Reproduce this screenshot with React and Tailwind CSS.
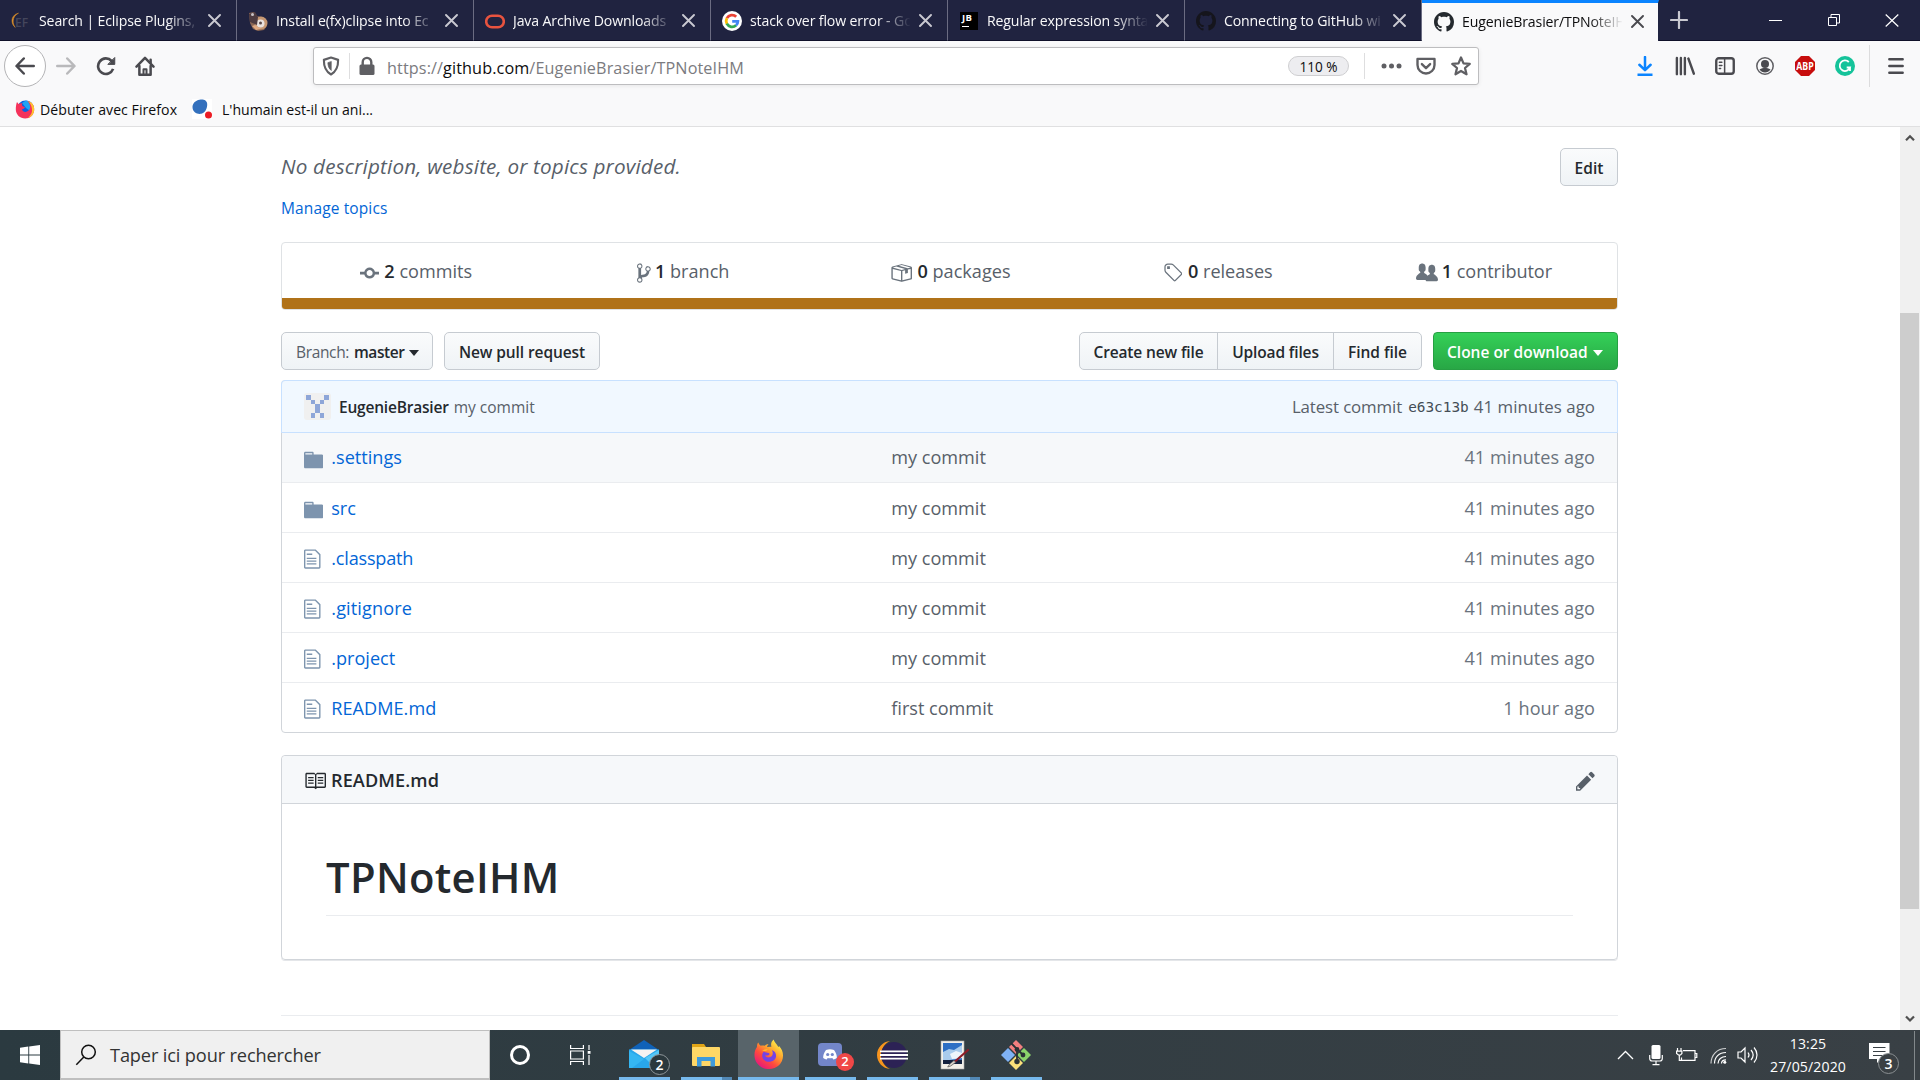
const OCT = {
  commit: [14, "M10.86 7c-.45-1.72-2-3-3.86-3-1.86 0-3.41 1.28-3.86 3H0v2h3.14c.45 1.72 2 3 3.86 3 1.86 0 3.41-1.28 3.86-3H14V7h-3.14zM7 10.2c-1.22 0-2.2-.98-2.2-2.2 0-1.22.98-2.2 2.2-2.2 1.22 0 2.2.98 2.2 2.2 0 1.22-.98 2.2-2.2 2.2z"],
  branch: [10, "M10 5c0-1.11-.89-2-2-2a1.993 1.993 0 0 0-1 3.72v.3c-.02.52-.23.98-.63 1.38-.4.4-.86.61-1.38.63-.83.02-1.48.16-2 .45V4.72a1.993 1.993 0 0 0-1-3.72C.88 1 0 1.89 0 3a2 2 0 0 0 1 1.72v6.56c-.59.35-1 .99-1 1.72 0 1.11.89 2 2 2 1.11 0 2-.89 2-2 0-.53-.2-1-.53-1.36.09-.06.48-.41.59-.47.25-.11.56-.17.94-.17 1.05-.05 1.95-.45 2.75-1.25S8.95 7.77 9 6.73h-.02C9.59 6.37 10 5.73 10 5zM2 1.8c.66 0 1.2.55 1.2 1.2 0 .65-.55 1.2-1.2 1.2C1.35 4.2.8 3.65.8 3c0-.65.55-1.2 1.2-1.2zm0 12.41c-.66 0-1.2-.55-1.2-1.2 0-.65.55-1.2 1.2-1.2.65 0 1.2.55 1.2 1.2 0 .65-.55 1.2-1.2 1.2zm6-8c-.66 0-1.2-.55-1.2-1.2 0-.65.55-1.2 1.2-1.2.65 0 1.2.55 1.2 1.2 0 .65-.55 1.2-1.2 1.2z"],
  package: [16, "M1 4.27v7.47c0 .45.3.84.75.97l6.5 1.73c.16.05.34.05.5 0l6.5-1.73c.45-.13.75-.52.75-.97V4.27c0-.45-.3-.84-.75-.97l-6.5-1.74a1.4 1.4 0 0 0-.5 0L1.75 3.3c-.45.13-.75.52-.75.97zm7 9.09l-6-1.59V5l6 1.61v6.75zM2 4l2.5-.67L11 5.06l-2.5.67L2 4zm13 7.77l-6 1.59V6.61l2-.55V8.5l2-.53V5.53L15 5v6.77zm-2-7.24L6.5 2.8l2-.53L15 4l-2 .53z"],
  tag: [14, "M7.73 1.73C7.26 1.26 6.62 1 5.96 1H3.5C2.13 1 1 2.13 1 3.5v2.47c0 .66.27 1.3.73 1.77l6.06 6.06c.39.39 1.02.39 1.41 0l4.59-4.59a.996.996 0 0 0 0-1.41L7.73 1.73zM2.38 7.09c-.31-.3-.47-.7-.47-1.13V3.5c0-.88.72-1.59 1.59-1.59h2.47c.42 0 .83.16 1.13.47l6.14 6.13-4.73 4.73-6.13-6.15zM3.01 3h2v2H3V3h.01z"],
  people: [16, "M16 12.999c0 .439-.45 1-1 1H7.995c-.539 0-.994-.447-.995-.999H1c-.54 0-1-.561-1-1 0-2.634 3-4 3-4s.229-.409 0-1c-.841-.621-1.058-.59-1-3 .058-2.419 1.367-3 2.5-3s2.442.58 2.5 3c.058 2.41-.159 2.379-1 3-.229.59 0 1 0 1s1.549.711 2.42 2.088C9.196 9.369 10 8.999 10 8.999s.229-.409 0-1c-.841-.62-1.058-.59-1-3 .058-2.419 1.367-3 2.5-3s2.437.581 2.495 3c.059 2.41-.158 2.38-1 3-.229.59 0 1 0 1s3.005 1.366 3.005 4"],
  folder: [14, "M13 4H7V3c0-.66-.31-1-1-1H1c-.55 0-1 .45-1 1v10c0 .55.45 1 1 1h12c.55 0 1-.45 1-1V5c0-.55-.45-1-1-1zM6 4H1V3h5v1z"],
  file: [12, "M6 5H2V4h4v1zM2 8h7V7H2v1zm0 2h7V9H2v1zm0 2h7v-1H2v1zm10-7.5V14c0 .55-.45 1-1 1H1c-.55 0-1-.45-1-1V2c0-.55.45-1 1-1h7.500L12 4.500zM11 5L8 2H1v12h10V5z"],
  book: [16, "M3 5h4v1H3V5zm0 3h4V7H3v1zm0 2h4V9H3v1zm11-5h-4v1h4V5zm0 2h-4v1h4V7zm0 2h-4v1h4V9zm2-6v9c0 .55-.45 1-1 1H9.5l-1 1-1-1H2c-.55 0-1-.45-1-1V3c0-.55.45-1 1-1h5.5l1 1 1-1H15c.55 0 1 .45 1 1zm-8 .5L7.5 3H2v9h6V3.5zm7-.5H9.5l-.5.5V12h6V3z"],
  pencil: [14, "M0 12v3h3l8-8-3-3-8 8zm3 2H1v-2h1v1h1v1zm10.3-9.3L12 6 9 3l1.3-1.3a.996.996 0 0 1 1.41 0l1.59 1.59c.39.39.39 1.02 0 1.41z"],
  github: [16, "M8 0C3.58 0 0 3.58 0 8c0 3.54 2.29 6.53 5.47 7.59.4.07.55-.17.55-.38 0-.19-.01-.82-.01-1.49-2.01.37-2.53-.49-2.69-.94-.09-.23-.48-.94-.82-1.13-.28-.15-.68-.52-.01-.53.63-.01 1.08.58 1.23.82.72 1.21 1.87.87 2.33.66.07-.52.28-.87.51-1.07-1.78-.2-3.64-.89-3.64-3.95 0-.87.31-1.59.82-2.15-.08-.2-.36-1.02.08-2.12 0 0 .67-.21 2.2.82.64-.18 1.32-.27 2-.27s1.36.09 2 .27c1.53-1.04 2.2-.82 2.2-.82.44 1.1.16 1.92.08 2.12.51.56.82 1.27.82 2.15 0 3.07-1.87 3.75-3.65 3.95.29.25.54.73.54 1.48 0 1.07-.01 1.93-.01 2.2 0 .21.15.46.55.38A8.01 8.01 0 0 0 16 8c0-4.42-3.58-8-8-8z"],
};

function Oct({ name, h = 22, className = "" }) {
  const [w, d] = OCT[name];
  return (
    <svg className={`shrink-0 ${className}`} width={(w * h) / 16} height={h} viewBox={`0 0 ${w} 16`} fill="currentColor">
      <path fillRule="evenodd" d={d} />
    </svg>
  );
}

function Line({ size = 20, box = 16, w = 2, children, className = "" }) {
  return (
    <svg className={`shrink-0 ${className}`} width={size} height={size} viewBox={`0 0 ${box} ${box}`} fill="none" stroke="currentColor" strokeWidth={w} strokeLinecap="round" strokeLinejoin="round">
      {children}
    </svg>
  );
}

const EclipseFav = () => (
  <svg width="20" height="20" viewBox="0 0 20 20">
    <path d="M7.500 2.200C3.200 3 .8 6.400 1 10.200c.1 2.600 1.500 5 3.300 6.200C2.800 14.500 2 12.300 2.200 9.800 2.400 6.200 4.500 3.500 7.500 2.200z" fill="#d98e2b" stroke="#d98e2b" strokeWidth=".5" />
    <text x="4" y="15.500" fontSize="12" fontWeight="600" fontFamily="Open Sans, sans-serif" fill="#44465c">EF</text>
  </svg>
);
const PhotoFav = () => (
  <svg width="20" height="20" viewBox="0 0 20 20">
    <path d="M1 2l5-1 3 4 5 1 4 4 1 5-3 4-6 1-5-2-3-6z" fill="#8a6653" />
    <ellipse cx="13" cy="12" rx="6.500" ry="6.500" fill="#c69873" />
    <circle cx="12.500" cy="12.500" r="4" fill="#e9e2df" />
    <path d="M1 3l6-2 3 5-1 8-7-3z" fill="#4d3b40" />
    <circle cx="4.500" cy="3.500" r="1.500" fill="#c9c3c6" />
    <circle cx="12.500" cy="12" r="1.500" fill="#5b4a4a" />
    <path d="M4 15l4 4 5-1-6-4z" fill="#e0a982" />
  </svg>
);
const OracleFav = () => (
  <svg width="20" height="20" viewBox="0 0 20 20" fill="none">
    <rect x="1.200" y="4.700" width="17.600" height="11.600" rx="5.800" stroke="#e8533f" strokeWidth="2.600" />
  </svg>
);
const GoogleFav = () => (
  <svg width="20" height="20" viewBox="0 0 20 20" fill="none">
    <circle cx="10" cy="10" r="10" fill="#fff" />
    <g strokeWidth="2.800">
      <path d="M4.900 7.200A5.900 5.900 0 0 1 14.200 5.800" stroke="#ea4335" />
      <path d="M4.900 12.800a5.900 5.900 0 0 1 0-5.600" stroke="#fbbc05" />
      <path d="M14.100 14.200A5.900 5.900 0 0 1 4.800 12.700" stroke="#34a853" />
      <path d="M10.200 10.300h5.700c0 1.700-.6 3-1.900 4" stroke="#4285f4" />
    </g>
  </svg>
);
const JbFav = () => (
  <span className="flex h-[18px] w-[18px] flex-col bg-black px-[2px] pt-px">
    <span className="text-[9.500px] leading-[10px] font-bold tracking-[0.300px] text-white">JB</span>
    <span className="mt-[3px] h-[1.500px] w-[7px] bg-white" />
  </span>
);

const TABS = [
  { t: "Search | Eclipse Plugins,", icon: <EclipseFav /> },
  { t: "Install e(fx)clipse into Ec", icon: <PhotoFav /> },
  { t: "Java Archive Downloads", icon: <OracleFav /> },
  { t: "stack over flow error - Go", icon: <GoogleFav /> },
  { t: "Regular expression synta", icon: <JbFav /> },
  { t: "Connecting to GitHub wi", icon: <Oct name="github" h={20} className="text-[#15151c]" /> },
  { t: "EugenieBrasier/TPNoteIH", icon: <Oct name="github" h={20} className="text-[#24292e]" />, active: true },
];

function Tab({ t, icon, active }) {
  return (
    <div className={`flex h-[41px] w-[237px] shrink-0 items-center border-r pl-[11px] ${active ? "border-t-[3px] border-r-transparent border-t-[#0a84ff] bg-[#f9f9fa] bg-clip-padding pb-px pl-[12px] text-[#0c0c0d]" : "border-b border-b-[#0f1029] border-r-[#6b6c82] pt-px text-[#f9f9fa]"}`}>
      <span className="flex w-5 shrink-0 justify-center">{icon}</span>
      <span className="ml-2 w-[160px] pt-px text-[14.100px] leading-[22px] tracking-[-0.130px] whitespace-nowrap [mask-image:linear-gradient(to_right,#000_128px,transparent_161px)]">{t}</span>
      <svg className={`ml-[9px] shrink-0 ${active ? "text-[#4a4a4f]" : "text-[#c9c9d1]"}`} width="13" height="13" viewBox="0 0 13 13" stroke="currentColor" strokeWidth="1.900" strokeLinecap="round">
        <path d="M1 1l11 11M12 1L1 12" />
      </svg>
    </div>
  );
}

function TabStrip() {
  return (
    <div className="flex h-[41px] bg-[#202340]">
      {TABS.map((x) => <Tab key={x.t} {...x} />)}
      <div className="flex flex-1 items-center border-b border-[#0f1029] pl-[11px]">
        <svg width="18" height="18" viewBox="0 0 18 18" stroke="#c9c9d1" strokeWidth="2.200" strokeLinecap="round"><path d="M9 1v16M1 9h16" /></svg>
        <div className="ml-auto flex items-center gap-[45px] pr-[21px] text-white">
          <svg className="mr-px" width="13" height="13" viewBox="0 0 13 13" stroke="currentColor"><path d="M0 6.500h13" /></svg>
          <svg width="12" height="13" viewBox="0 0 12 13" fill="none" stroke="currentColor"><path d="M.5 3.500h8v8h-8zM3 3.500V.5h8.500v8.500H8.500" /></svg>
          <svg width="14" height="13" viewBox="0 0 14 13" stroke="currentColor" strokeWidth="1.200"><path d="M.7.5l12.600 12M13.300.5L.7 12.500" /></svg>
        </div>
      </div>
    </div>
  );
}

const FirefoxIcon = ({ size, id }) => (
  <svg width={size} height={size} viewBox="0 0 32 32">
    <defs>
      <linearGradient id={id} x1="0.85" y1="0.1" x2="0.2" y2="0.95">
        <stop offset="0" stopColor="#fff14a" /><stop offset=".35" stopColor="#ffa12c" /><stop offset=".65" stopColor="#ff4a3d" /><stop offset="1" stopColor="#e6157f" />
      </linearGradient>
    </defs>
    <path d="M16.500 31C8 31 1.500 24.700 1.500 16.500c0-3.800 1.200-6.200 2.600-8.200-.1-1.600.4-3.500 1.300-4.600.6 1.500 1.500 2.600 2.600 3.300 1.500-.4 2.800-.4 4.200 0 .9-.9 2.400-1.700 3.900-1.800-1 .9-1.400 2-1.600 3l4.500-.2c-.9-3 0-5.500 2.300-7.500C21.800 3 24.500 5 26 8c.5.500.8.300.7-1C29.500 10 31 13 31 17c0 8-6.300 14-14.500 14z" fill={`url(#${id})`} />
    <path d="M16.500 23.500c-4 0-7-2.800-7-6.300 0-1.700.8-3.300 1.800-4.200 1.200 1.300 3.200 1.100 4.700 1.400 1.200.2 1.500 1.500.3 2.200-1.500.8-2.900.5-4 .5 1 2 3.500 2.500 5.700 1.500 2.500-1.100 3.200-4.500 1.300-7.300 3 .8 4.800 3.500 4.500 6.500-.3 3.400-3.400 5.700-7.300 5.700z" fill="#7542e5" />
    <path d="M9.500 12.500c1.500-1.800 3.800-2.500 6-2.200-1 .8-1.500 1.500-1.800 2.200z" fill="#ffb52e" />
  </svg>
);

const FirefoxGlobe = () => (
  <svg width="20" height="20" viewBox="0 0 20 20">
    <circle cx="10.500" cy="10" r="8.500" fill="#0a5fe0" />
    <path d="M7 4l4-2.500 5 1.500 2 5-3 4-4-3z" fill="#1fa4f5" />
    <path d="M2 3l1.500 2C5 4 6.500 4 7.500 4.500 6.500 6 7 7.500 10 8c-.5 1.500-2 2-3 2.500.5 2 3 3 5 2 2.500-1 3.500-3 3-5.500-.5-2-1-3.500-2.500-5C17 3 19.500 6.500 19.200 11c-.4 5-4.200 8.500-9 8.500C5 19.500.8 15.500.8 10.500.8 7.500 1.200 5 2 3z" fill="#f5325b" />
    <path d="M13 2c4 1 6.500 4.500 6.200 9-.3 4-2.700 7-6.200 8 3-3 4.500-5.500 4-9-.4-3-1.500-6-4-8z" fill="#ffc42e" />
  </svg>
);

function NavBar() {
  return (
    <div className="flex h-[50px] items-center text-[#4a4a4f]">
      <div className="ml-[4px] flex h-[42px] w-[42px] items-center justify-center rounded-full border border-[#b4b4b6] bg-white">
        <Line><path d="M15 8H1.500M7 2L1.200 8 7 14" /></Line>
      </div>
      <Line className="ml-[10px] text-[#b9b9bb]"><path d="M1 8h13.500M9 2l5.800 6L9 14" /></Line>
      <Line className="ml-[20px]" w={2.1}><path d="M13.700 10.300A6.200 6.200 0 1 1 12.500 4l1.500 1.700" strokeLinecap="butt" /><path d="M15 1.500v5.200H9.800z" fill="currentColor" strokeWidth=".8" /></Line>
      <Line className="ml-[19px]"><path d="M1.200 8.500L8 1.500l6.800 7" /><path d="M3.500 8v7h9V8" /><path d="M6.800 14.500v-4h2.400v4" strokeWidth="1.600" /><path d="M12.500 3v2" /></Line>
      <div className="ml-[158px] flex h-[38px] w-[1166px] items-center rounded-[3px] border border-[#bdbdbf] bg-white shadow-[0_1px_4px_rgba(0,0,0,0.08)]">
        <Line size={20} className="ml-[7px] text-[#5f5f63]" w={1.7}><path d="M8 1.200L2.300 3.100c-.1 5.600 1.600 9.400 5.700 11.700 4.100-2.300 5.800-6.100 5.700-11.700z" /><path d="M8 4.500L5.500 5.300C5.600 8 6.300 10 8 11.400z" fill="currentColor" strokeWidth=".6" /></Line>
        <span className="ml-[8px] h-[26px] w-px bg-[#dededf]" />
        <svg className="ml-[8px]" width="18" height="20" viewBox="0 0 18 20" fill="none"><rect x="1.500" y="8.500" width="15" height="10.500" rx="1.500" fill="#5f5f63" /><path d="M4.700 9V6.200a4.300 4.300 0 0 1 8.600 0V9" stroke="#5f5f63" strokeWidth="2.400" /></svg>
        <span className="ml-[11px] pt-[3px] text-[16.200px] leading-[22px] tracking-[0.110px] text-[#7b7b80]">https://<span className="text-[#0c0c0d]">github.com</span>/EugenieBrasier/TPNoteIHM</span>
        <span className="ml-auto flex h-[20px] w-[61px] items-center justify-center rounded-full border border-[#cfcfd1] bg-[#ededf0] pt-[2px] text-[13.600px] text-[#0c0c0d]">110 %</span>
        <span className="ml-[15px] h-[26px] w-px bg-[#dededf]" />
        <svg className="ml-[16px] text-[#5f5f63]" width="21" height="6" viewBox="0 0 21 6" fill="currentColor"><circle cx="3" cy="3" r="2.500" /><circle cx="10.500" cy="3" r="2.500" /><circle cx="18" cy="3" r="2.500" /></svg>
        <Line className="ml-[14px] text-[#5f5f63]" w={1.9}><path d="M1.200 2.300h13.600v4.900a6.800 6.800 0 0 1-13.600 0z" /><path d="M4.700 6.500L8 9.700l3.300-3.200" /></Line>
        <Line className="mr-[7px] ml-[15px] text-[#5f5f63]" w={1.8}><path d="M8 1.200l2 4.700 5 .4-3.800 3.300 1.200 5L8 12l-4.400 2.600 1.200-5L1 6.300l5-.4z" /></Line>
      </div>
      <Line className="ml-auto text-[#0a84ff]"><path d="M8 .8v10M3.500 7L8 11.300 12.500 7" /><path d="M2 15h12" strokeLinecap="butt" /></Line>
      <svg className="ml-[20px]" width="20" height="20" viewBox="0 0 16 16" stroke="currentColor" strokeWidth="1.900" strokeLinecap="round"><path d="M1.500 1.500v13M4.700 1.500v13M7.900 1.500v13M10.700 2l4.400 12.200" /></svg>
      <Line className="ml-[20px]" w={1.9}><rect x="1" y="1.800" width="14" height="12.400" rx="2" /><path d="M7.700 2v12M3.500 5h2M3.500 7.500h2M3.500 10h1" strokeWidth="1.200" /></Line>
      <svg className="ml-[20px]" width="20" height="20" viewBox="0 0 20 20" fill="none"><circle cx="10" cy="10" r="8.200" stroke="#5f5f63" strokeWidth="1.500" /><circle cx="10" cy="8" r="4" fill="#4a4a4f" /><path d="M4.500 13.600c2-1.200 3.500-1.600 5.500-1.600s3.500.4 5.500 1.600c-1.300 1.900-3.300 2.900-5.500 2.900s-4.200-1-5.500-2.900z" fill="#4a4a4f" /></svg>
      <svg className="ml-[20px]" width="20" height="20" viewBox="0 0 20 20"><path d="M6 0h8l6 6v8l-6 6H6l-6-6V6z" fill="#c70d0d" /><text x="1.300" y="13.700" fontSize="10.500" fontWeight="700" fontFamily="Open Sans, sans-serif" fill="#fff" textLength="17.400" lengthAdjust="spacingAndGlyphs">ABP</text></svg>
      <svg className="ml-[20px]" width="20" height="20" viewBox="0 0 20 20" fill="none"><circle cx="10" cy="10" r="10" fill="#15c39a" /><path d="M13.800 6A5.300 5.300 0 1 0 15 11.500h-3.300M15 11v4" stroke="#fff" strokeWidth="1.800" /></svg>
      <span className="ml-[14px] h-[42px] w-px bg-[#dcdcdd]" />
      <svg className="mr-[16px] ml-[18px]" width="16" height="20" viewBox="0 0 16 20" stroke="currentColor" strokeWidth="2.400" strokeLinecap="round"><path d="M1.300 3.300h13.400M1.300 10h13.400M1.300 16.700h13.400" /></svg>
    </div>
  );
}

function Bookmarks() {
  return (
    <div className="flex h-[36px] items-center border-b border-[#e0e0e1] text-[14.100px] text-[#0c0c0d]">
      <span className="ml-[15px]"><FirefoxGlobe /></span>
      <span className="ml-[5px] w-[137px] pt-[3px] tracking-[0.050px] whitespace-nowrap">Débuter avec Firefox</span>
      <svg className="ml-[15px]" width="20" height="20" viewBox="0 0 20 20"><rect width="20" height="20" fill="#fff" /><path d="M7.500.8C11 0 15 1 15.200 5c.2 4.500-2 9-6 9.800C5 15.600.8 13 .5 8.500.3 4.500 3.500 1.500 7.500.8z" fill="#3370bd" /><circle cx="16.500" cy="16" r="3.500" fill="#ec1c24" /></svg>
      <span className="ml-[10px] pt-[3px] tracking-[-0.020px] whitespace-nowrap">L'humain est-il un ani...</span>
    </div>
  );
}

const Btn = ({ children, className = "" }) => (
  <div className={`flex h-[38px] items-center border border-[#c6cbd1] bg-linear-to-b from-[#fafbfc] to-[#eff3f6] pt-[3px] text-[15.500px] font-semibold whitespace-nowrap text-[#24292e] ${className}`}>{children}</div>
);
const Caret = ({ className = "" }) => <span className={`h-0 w-0 border-x-[5px] border-t-[6px] border-x-transparent ${className}`} />;

const STATS = [
  ["commit", "2", "commits", "gap-[5px] pl-px"],
  ["branch", "1", "branch", "gap-[4px] pl-px"],
  ["package", "0", "packages", "gap-[5px] pl-px"],
  ["tag", "0", "releases", "gap-[6px] pl-px"],
  ["people", "1", "contributor", "gap-[4px] tracking-[-0.060px]"],
];

const FILES = [
  ["folder", ".settings", "my commit", "41 minutes ago"],
  ["folder", "src", "my commit", "41 minutes ago"],
  ["file", ".classpath", "my commit", "41 minutes ago"],
  ["file", ".gitignore", "my commit", "41 minutes ago"],
  ["file", ".project", "my commit", "41 minutes ago"],
  ["file", "README.md", "first commit", "1 hour ago"],
];

const NAME_TRACKING = {
  ".settings": "tracking-[0.020px]",
  ".classpath": "tracking-[-0.200px]",
  ".gitignore": "tracking-[0.130px]",
  "README.md": "tracking-[0.040px]",
};

const AVATAR = ["10001", "01010", "00100", "00100", "01010"];

function Avatar() {
  return (
    <div className="grid h-[27px] w-[27px] shrink-0 grid-cols-5 rounded-[3px] bg-[#f0f0f0] p-[2px]">
      {AVATAR.join("").split("").map((c, i) => <span key={i} className={c === "1" ? "bg-[#8ea6d8]" : ""} />)}
    </div>
  );
}

function Repo() {
  return (
    <main className="ml-[281px] w-[1337px] text-[#586069]">
      <div className="flex justify-between pt-[21px]">
        <div>
          <p className="mt-[3px] text-[20.700px] leading-[30px] tracking-[0.160px] italic">No description, website, or topics provided.</p>
          <p className="mt-[15px] mb-px text-[15.500px] leading-[24px] tracking-[0.120px] text-[#0366d6]">Manage topics</p>
        </div>
        <Btn className="w-[58px] justify-center rounded-[5px]">Edit</Btn>
      </div>

      <section className="mt-[21px] h-[68px] overflow-hidden rounded-[4px] border border-[#dfe2e5]">
        <div className="flex h-[55px] items-center pt-[3px]">
          {STATS.map(([icon, n, label, gap]) => (
            <div key={label} className={`flex flex-1 items-center justify-center pb-[2px] text-[18.100px] leading-[28px] ${gap}`}>
              <Oct name={icon} className="mt-[3px] text-[#6a737d]" />
              <span><span className="font-semibold text-[#24292e]">{n}</span> {label}</span>
            </div>
          ))}
        </div>
        <div className="h-[11px] bg-[#b07219]" />
      </section>

      <div className="mt-[22px] flex">
        <Btn className="w-[152px] rounded-[5px] pl-[14px]">
          <span className="font-normal tracking-[-0.350px] text-[#586069]">Branch:</span>
          <span className="ml-[5px] tracking-[-0.450px]">master</span>
          <Caret className="ml-[5px] border-t-[#24292e]" />
        </Btn>
        <Btn className="ml-[11px] w-[156px] justify-center rounded-[5px] tracking-[-0.100px]">New pull request</Btn>
        <Btn className="ml-auto w-[139px] justify-center rounded-l-[5px] tracking-[-0.140px]">Create new file</Btn>
        <Btn className="-ml-px w-[117px] justify-center tracking-[-0.140px]">Upload files</Btn>
        <Btn className="-ml-px w-[89px] justify-center rounded-r-[5px] tracking-[-0.050px]">Find file</Btn>
        <div className="ml-[11px] flex h-[38px] w-[185px] items-center rounded-[4px] border border-[#279f43] bg-linear-to-b from-[#34d058] to-[#28a745] pt-[3px] pl-[13px] text-[15.500px] font-semibold whitespace-nowrap text-white">
          Clone or download<Caret className="ml-[5px] border-t-white" />
        </div>
      </div>

      <section className="mt-[10px] rounded-[4px] border border-[#d1d5da]">
        <div className="-mx-px -mt-px flex h-[53px] items-center rounded-t-[4px] border border-[#c8e1ff] bg-[#f1f8ff] px-[22px]">
          <Avatar />
          <span className="ml-[8px] pt-[2px] text-[15.500px] font-semibold tracking-[-0.200px] text-[#24292e]">EugenieBrasier</span>
          <span className="ml-[5px] pt-[2px] text-[15.500px]">my commit</span>
          <span className="ml-auto flex items-center text-[16.850px]">
            <span className="tracking-[-0.110px]">Latest commit</span>
            <span className="ml-[6px] pt-[3px] font-['DejaVu_Sans_Mono'] text-[14.400px] text-[#444d56]">e63c13b</span>
            <span className="ml-[5px] tracking-[0.040px]">41 minutes ago</span>
          </span>
        </div>
        {FILES.map(([icon, name, msg, age], i) => (
          <div key={name} className={`flex items-center px-[22px] text-[18.100px] ${i === 0 ? "h-[49px] bg-[#f6f8fa] pt-px" : "h-[50px] border-t border-[#eaecef] pt-[3px]"}`}>
            <Oct name={icon} className={`text-[#7d94ae] ${i === 0 ? "mt-[3px]" : i === 1 ? "mt-px" : "-mt-px"}`} />
            <span className={`w-[560px] text-[#0366d6] ${NAME_TRACKING[name] ?? ""} ${icon === "folder" ? "ml-[8px]" : "ml-[10.750px]"}`}>{name}</span>
            <span>{msg}</span>
            <span className="ml-auto tracking-[0.070px] text-[#6a737d]">{age}</span>
          </div>
        ))}
      </section>

      <section className="mt-[22px] h-[205px] rounded-[4px] border border-[#d1d5da] shadow-[0_1px_0_#e4e6e9]">
        <div className="flex h-[48px] items-center rounded-t-[4px] border-b border-[#d1d5da] bg-[#f6f8fa] px-[22px] text-[#24292e]">
          <Oct name="book" className="mt-[3px]" />
          <span className="ml-[5px] pt-[2px] text-[18.100px] font-semibold tracking-[0.110px]">README.md</span>
          <Oct name="pencil" className="mt-[2px] ml-auto text-[#586069]" />
        </div>
        <h1 className="mx-[44px] mt-[45px] h-[67px] border-b border-[#eaecef] text-[41.800px] leading-[56px] font-semibold tracking-[0.290px] text-[#24292e]">TPNoteIHM</h1>
      </section>
      <div className="mt-[55px] h-px bg-[#eaecef]" />
    </main>
  );
}

function Scrollbar() {
  return (
    <div className="flex w-[20px] flex-col items-center justify-between bg-[#f0f0f0] py-[7px]">
      <svg width="10" height="8" viewBox="0 0 10 8" fill="none" stroke="#505050" strokeWidth="2.200"><path d="M1 6.200l4-4 4 4" /></svg>
      <div className="mt-[171px] mb-auto h-[596px] w-[19px] self-start bg-[#cdcdcd]" />
      <svg width="10" height="8" viewBox="0 0 10 8" fill="none" stroke="#505050" strokeWidth="2.200"><path d="M1 1.500l4 4 4-4" /></svg>
    </div>
  );
}

const MailIcon = () => (
  <svg width="32" height="32" viewBox="0 0 32 32"><path d="M1 11L16 1l15 10v5H1z" fill="#0f62b8" /><path d="M1 10.500h30V29H1z" fill="#29a6ea" /><path d="M3 10.500h26L16 19z" fill="#f6f3f2" /><path d="M31 11L17 19l10 10h4z" fill="#55c8f8" /><path d="M1 12l15 8-12 9H1z" fill="#35b6f2" /></svg>
);
const FolderIcon = () => (
  <svg width="30" height="28" viewBox="0 0 30 28"><path d="M1 3h12l2 3h12v6H1z" fill="#e0a416" /><rect x="1" y="6" width="28" height="19" rx="1" fill="#ffd766" /><path d="M6 25.500V16h18v9.500h-4.500V20h-9v5.500z" fill="#3f9bdc" /></svg>
);
const DiscordIcon = () => (
  <svg width="26" height="26" viewBox="0 0 26 26"><rect x="1" y="1" width="24" height="23" rx="4" fill="#7386c9" /><path d="M9 8c2.700-1 5.300-1 8 0 2 2.500 3 5.500 2.800 8-1.200.9-2.200 1.300-3.500 1.500l-1-1.500c-1.600.3-3 .3-4.600 0l-1 1.500C8.400 17.300 7.400 16.900 6.200 16 6 13.500 7 10.500 9 8z" fill="#fff" /><circle cx="10.700" cy="12.500" r="1.600" fill="#7386c9" /><circle cx="15.300" cy="12.500" r="1.600" fill="#7386c9" /></svg>
);
const EclipseIcon = () => (
  <svg width="32" height="30" viewBox="0 0 32 30"><path d="M14 1C7 1.500 1 7.500 1 15s6 13.500 13 14c-5-2-9-8-9-14S9 3 14 1z" fill="#f7941e" /><circle cx="18" cy="15" r="13" fill="#2c2255" /><path d="M4 11.300h28M4 15h28M4 18.700h28" stroke="#fff" strokeWidth="1.800" /></svg>
);
const PaintIcon = () => (
  <svg width="32" height="32" viewBox="0 0 32 32"><rect x="3" y="2" width="23" height="28" fill="#f3f0e9" stroke="#aaa" strokeWidth=".6" /><rect x="5" y="4" width="19" height="18" fill="#2e6fc4" /><path d="M5 13l6-3 5 1 8-5v13l-19 3z" fill="#a9cbec" /><path d="M12 15l6-3 6 2v5l-10 1z" fill="#eef5fb" /><path d="M5 21h19v4H5z" fill="#14223f" /><path d="M30 11L17 22.500" stroke="#8d1c28" strokeWidth="2.200" strokeLinecap="round" /><path d="M16 21.500l1.700 1.800-5 3.700-3 1 2-3z" fill="#d8d3cb" stroke="#555" strokeWidth=".7" /></svg>
);
const GitIcon = () => (
  <svg width="32" height="32" viewBox="0 0 32 32">
    <path d="M16 1l7 7-7 7-7-7z" fill="#f37f7f" /><path d="M8 9l7 7-7 7-7-7z" fill="#7fb2f5" /><path d="M24 9l7 7-7 7-7-7z" fill="#8bd36b" /><path d="M16 17l7 7-7 7-7-7z" fill="#fbe07a" />
    <path d="M11 4l6 6v13M17 10l6 6" stroke="#2a3236" strokeWidth="1.800" fill="none" /><circle cx="17" cy="10.500" r="2.400" fill="#2a3236" /><circle cx="17" cy="22.500" r="2.700" fill="#2a3236" /><circle cx="23" cy="16" r="2.400" fill="#2a3236" />
  </svg>
);

const APPS = [
  { icon: <MailIcon />, badge: "dark" },
  { icon: <FolderIcon />, more: true },
  { icon: <FirefoxIcon size={31} id="ffBig" />, active: true },
  { icon: <DiscordIcon />, badge: "red" },
  { icon: <EclipseIcon /> },
  { icon: <PaintIcon />, more: true },
  { icon: <GitIcon /> },
];

function Taskbar() {
  return (
    <div className="flex h-[50px] bg-linear-to-r from-[#2b3a40] to-[#394045] text-white">
      <div className="flex w-[60px] items-center justify-center">
        <svg width="20" height="20" viewBox="0 0 20 20" fill="#fff"><path d="M0 2.700l8.300-1.100v7.900H0zM9.200 1.400L20 0v9.500H9.200zM0 10.400h8.300v8L0 17.200zM9.200 10.400H20V20L9.200 18.500z" /></svg>
      </div>
      <div className="flex w-[430px] items-center border border-b-2 border-[#bfbfbf] bg-[#f0f0f0] pl-[14px]">
        <svg width="22" height="22" viewBox="0 0 22 22" fill="none" stroke="#111" strokeWidth="1.500"><circle cx="13.500" cy="8" r="6.800" /><path d="M8.800 13L1.300 20.700" /></svg>
        <span className="ml-[13px] pt-[3px] text-[18.200px] tracking-[-0.140px] text-[#333]">Taper ici pour rechercher</span>
      </div>
      <div className="flex w-[60px] items-center justify-center"><span className="h-[20px] w-[20px] rounded-full border-[3px] border-white" /></div>
      <div className="flex w-[60px] items-center justify-center">
        <svg width="21" height="20" viewBox="0 0 21 20" fill="none" stroke="#fff" strokeWidth="1.200"><path d="M.6 0v3.500h12.800V0M.6 6h12.800v8H.6zM.6 20v-3.500h12.800V20M19 0v5M19 10v10" /><path d="M17.700 6h2.800v2.800h-2.800z" fill="#fff" stroke="none" /></svg>
      </div>
      <div className="ml-[3px] flex">
        {APPS.map(({ icon, badge, more, active }, i) => (
          <div key={i} className={`relative flex w-[62px] flex-col items-center ${active ? "bg-[#58646a] bg-clip-content px-[0.500px]" : ""}`}>
            <span className="flex h-[47px] items-center pt-[2px]">{icon}</span>
            <span className={`flex h-[3px] justify-end bg-[#76b9ed] ${active ? "w-[61px]" : "w-[51px]"}`}>{more && <span className="w-[10px] bg-[#5288b5]" />}</span>
            {badge && (
              <span className={`absolute flex items-center justify-center rounded-full font-semibold ${badge === "red" ? "top-[23px] left-[37px] h-[18px] w-[18px] bg-[#f04747] text-[13px]" : "top-[24px] left-[36px] h-[21px] w-[21px] border border-[#8d9599] bg-[#2b383d] text-[14px]"}`}>2</span>
            )}
          </div>
        ))}
      </div>
      <div className="ml-auto flex items-center">
        <svg width="17" height="10" viewBox="0 0 17 10" fill="none" stroke="#fff" strokeWidth="1.300"><path d="M1 9l7.500-7.500L16 9" /></svg>
        <svg className="ml-[15px]" width="14" height="21" viewBox="0 0 14 21" fill="none"><rect x="2.500" y="0" width="9" height="14" rx="1.500" fill="#fff" /><path d="M.7 10v3.500c0 1.500 1 2.500 2.500 2.500h7.600c1.500 0 2.500-1 2.500-2.500V10M7 16v3.500M3.500 19.700h7" stroke="#fff" strokeWidth="1.200" /></svg>
        <svg className="ml-[13px]" width="22" height="14" viewBox="0 0 22 14" fill="none" stroke="#fff" strokeWidth="1.200"><path d="M7 2.600h12v9.800H5.500V9.500M19.500 5.500h1.300v4h-1.300" /><path d="M1.500 0v3M5 0v3M.6 3.200h5.300v2.300L4.500 7h-2L.6 5.500zM3.300 7v5.400h2" /></svg>
        <svg className="ml-[12px]" width="17" height="17" viewBox="0 0 17 17" fill="none" stroke="#fff" strokeWidth="1.200"><path d="M1 16.500C1 8 7 1.500 16 1.500" opacity=".75" /><path d="M4.500 16.500C4.500 10 9 5.500 16 5.500M8 16.500c0-4 3.300-7 8-7M11.500 16.500c0-2.200 1.700-3.700 4.500-3.700" /><circle cx="14.800" cy="15.300" r="1.500" fill="#fff" stroke="none" /></svg>
        <svg className="ml-[10px]" width="21" height="18" viewBox="0 0 21 18" fill="none" stroke="#fff" strokeWidth="1.200"><path d="M1 6h3l4-4v14l-4-4H1zM11 6.500c1.200 1.500 1.200 3.500 0 5M14 4c2.600 3 2.600 7 0 10M17 1.500c4 4.500 4 10.500 0 15" /></svg>
        <div className="ml-[11px] flex w-[78px] flex-col items-center text-[14.100px] leading-[23px] tracking-[0.120px]"><span>13:25</span><span>27/05/2020</span></div>
        <div className="relative ml-[22px] h-[30px] w-[31px]">
          <svg className="mt-[3px]" width="21" height="20" viewBox="0 0 21 20"><path d="M0 0h20.500v16H12l-4 4v-4H0z" fill="#fff" /><path d="M4 4.500h12.500M4 8.500h12.500M4 12.500h12.500" stroke="#394045" strokeWidth="1.200" /></svg>
          <span className="absolute top-[13px] left-[9px] flex h-[21px] w-[21px] items-center justify-center rounded-full border border-[#8a8f92] bg-[#3a4044] text-[14px] font-semibold">3</span>
        </div>
        <span className="mr-[5px] ml-[14px] h-[49px] w-px bg-[#82888b]" />
      </div>
    </div>
  );
}

export default function App() {
  return (
    <div className="flex h-[1080px] w-[1920px] flex-col overflow-hidden bg-white font-['Open_Sans','Noto_Sans',sans-serif]">
      <TabStrip />
      <div className="bg-[#f9f9fa]">
        <NavBar />
        <Bookmarks />
      </div>
      <div className="flex h-[903px] justify-between overflow-hidden">
        <Repo />
        <Scrollbar />
      </div>
      <Taskbar />
    </div>
  );
}
